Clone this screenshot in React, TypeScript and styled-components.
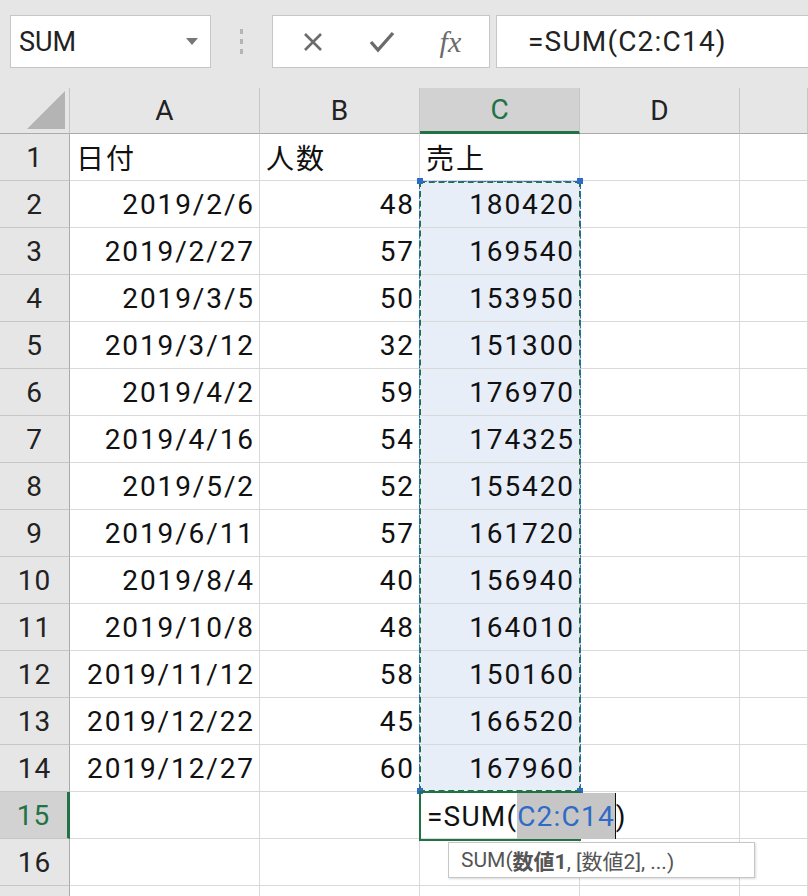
import React from "react";
import styled, { createGlobalStyle } from "styled-components";

const G = createGlobalStyle`
  html,body{margin:0;padding:0;background:#fff;overflow:hidden;}
  *{box-sizing:border-box;}
  body{font-family:Roboto,"Noto Sans CJK JP",sans-serif;}
`;
const Bar = styled.div`
  height:88px;background:#e6e6e6;display:flex;align-items:flex-start;padding:15px 0 0 10px;
`;
const NameBox = styled.div`
  width:201px;height:53px;background:#fff;border:1px solid #c6c6c6;display:flex;align-items:center;
  justify-content:space-between;padding:0 12px 0 8px;font-size:27px;color:#222;
`;
const Tri = styled.div`width:0;height:0;border-left:6px solid transparent;border-right:6px solid transparent;border-top:7px solid #777;`;
const Dots = styled.div`width:61px;height:53px;display:flex;flex-direction:column;align-items:center;justify-content:center;gap:5px;
  & span{width:3px;height:5px;background:#b5b5b5;}`;
const Btns = styled.div`width:218px;height:53px;background:#fff;border:1px solid #c6c6c6;display:flex;align-items:center;justify-content:space-around;padding:0 6px;color:#6b6b6b;`;
const Fx = styled.span`font-family:"Liberation Serif",serif;font-style:italic;font-size:30px;color:#6b6b6b;`;
const Input = styled.div`flex:1;margin-left:6px;height:53px;background:#fff;border:1px solid #c6c6c6;border-right:none;display:flex;align-items:center;padding-left:31px;font-size:28px;letter-spacing:1.2px;color:#222;`;

const Sheet = styled.div`
  position:relative;display:grid;grid-template-columns:70px 190px 160px 160px 160px 1fr;
  grid-auto-rows:47px;grid-template-rows:46px;
`;
const Corner = styled.div`background:#e6e6e6;border-right:1px solid #c6c6c6;border-bottom:1px solid #ababab;position:relative;
  &::after{content:"";position:absolute;right:4px;bottom:4px;border-left:38px solid transparent;border-bottom:38px solid #b4b4b4;}`;
const ColHead = styled.div<{ $sel?: boolean }>`
  background:${p => p.$sel ? "#d2d2d2" : "#e6e6e6"};color:${p => p.$sel ? "#217346" : "#222"};
  border-right:1px solid #c6c6c6;border-bottom:${p => p.$sel ? "3px solid #217346" : "1px solid #ababab"};
  display:flex;align-items:center;justify-content:center;font-size:28px;
`;
const RowHead = styled.div<{ $sel?: boolean }>`
  background:${p => p.$sel ? "#d2d2d2" : "#e6e6e6"};color:${p => p.$sel ? "#217346" : "#222"};
  border-right:${p => p.$sel ? "3px solid #217346" : "1px solid #ababab"};border-bottom:1px solid #c6c6c6;
  display:flex;align-items:center;justify-content:center;font-size:28px;letter-spacing:1px;
`;
const Cell = styled.div<{ $r?: boolean; $hl?: boolean }>`
  border-right:1px solid #d9d9d9;border-bottom:1px solid #d9d9d9;background:${p => p.$hl ? "#e8eef8" : "#fff"};
  display:flex;align-items:center;justify-content:${p => p.$r ? "flex-end" : "flex-start"};
  padding:0 4px 0 6px;font-size:28px;letter-spacing:1.9px;color:#111;white-space:nowrap;
`;
const Marquee = styled.div`
  position:absolute;left:419px;top:93px;width:162px;height:611px;border:2px dashed #217346;
  outline:1px dashed #2e6bc6;outline-offset:-1px;pointer-events:none;
`;
const Handle = styled.div<{ $x: number; $y: number }>`position:absolute;left:${p => p.$x}px;top:${p => p.$y}px;width:6px;height:6px;background:#2e6bc6;`;
const Active = styled.div`
  position:absolute;left:419px;top:703px;width:162px;height:50px;border:2px solid #217346;
`;
const Edit = styled.div`
  position:absolute;left:427px;top:705px;height:46px;display:flex;align-items:center;font-size:28px;letter-spacing:1.2px;color:#111;white-space:nowrap;
`;
const Ref = styled.span`color:#2e6bc6;background:#c6c6c6;display:inline-flex;align-items:center;height:46px;border-right:1px solid #111;`;
const Tip = styled.div`
  position:absolute;left:448px;top:754px;width:307px;height:36px;background:#fff;border:1px solid #c6c6c6;
  box-shadow:1px 1px 2px rgba(0,0,0,.15);display:flex;align-items:center;padding-left:12px;font-size:21px;color:#555;white-space:nowrap;
`;

const rows: [string, string, string][] = [
  ["2019/2/6","48","180420"],["2019/2/27","57","169540"],["2019/3/5","50","153950"],["2019/3/12","32","151300"],
  ["2019/4/2","59","176970"],["2019/4/16","54","174325"],["2019/5/2","52","155420"],["2019/6/11","57","161720"],
  ["2019/8/4","40","156940"],["2019/10/8","48","164010"],["2019/11/12","58","150160"],["2019/12/22","45","166520"],
  ["2019/12/27","60","167960"],
];

export default function App() {
  return (
    <>
      <G />
      <Bar>
        <NameBox>SUM<Tri /></NameBox>
        <Dots><span /><span /><span /></Dots>
        <Btns>
          <svg width="24" height="24" viewBox="0 0 24 24"><path d="M4 4L20 20M20 4L4 20" stroke="#6b6b6b" strokeWidth="2.6" /></svg>
          <svg width="28" height="24" viewBox="0 0 28 24"><path d="M3 12l7 8L25 3" stroke="#6b6b6b" strokeWidth="3.4" fill="none" /></svg>
          <Fx>fx</Fx>
        </Btns>
        <Input>=SUM(C2:C14)</Input>
      </Bar>
      <Sheet>
        <Corner />
        <ColHead>A</ColHead><ColHead>B</ColHead><ColHead $sel>C</ColHead><ColHead>D</ColHead><ColHead />
        <RowHead>1</RowHead><Cell>日付</Cell><Cell>人数</Cell><Cell>売上</Cell><Cell /><Cell />
        {rows.map((r, i) => (
          <React.Fragment key={i}>
            <RowHead>{i + 2}</RowHead>
            <Cell $r>{r[0]}</Cell><Cell $r>{r[1]}</Cell><Cell $r $hl>{r[2]}</Cell><Cell /><Cell />
          </React.Fragment>
        ))}
        <RowHead $sel>15</RowHead><Cell /><Cell /><Cell /><Cell /><Cell />
        <RowHead>16</RowHead><Cell /><Cell /><Cell /><Cell /><Cell />
        <RowHead /><Cell /><Cell /><Cell /><Cell /><Cell />
        <Marquee />
        <Handle $x={417} $y={90} /><Handle $x={577} $y={90} /><Handle $x={417} $y={700} /><Handle $x={577} $y={700} />
        <Active />
        <Edit>=SUM(<Ref>C2:C14</Ref>)</Edit>
        <Tip>SUM(<b>数値1</b>, [数値2], ...)</Tip>
      </Sheet>
    </>
  );
}
